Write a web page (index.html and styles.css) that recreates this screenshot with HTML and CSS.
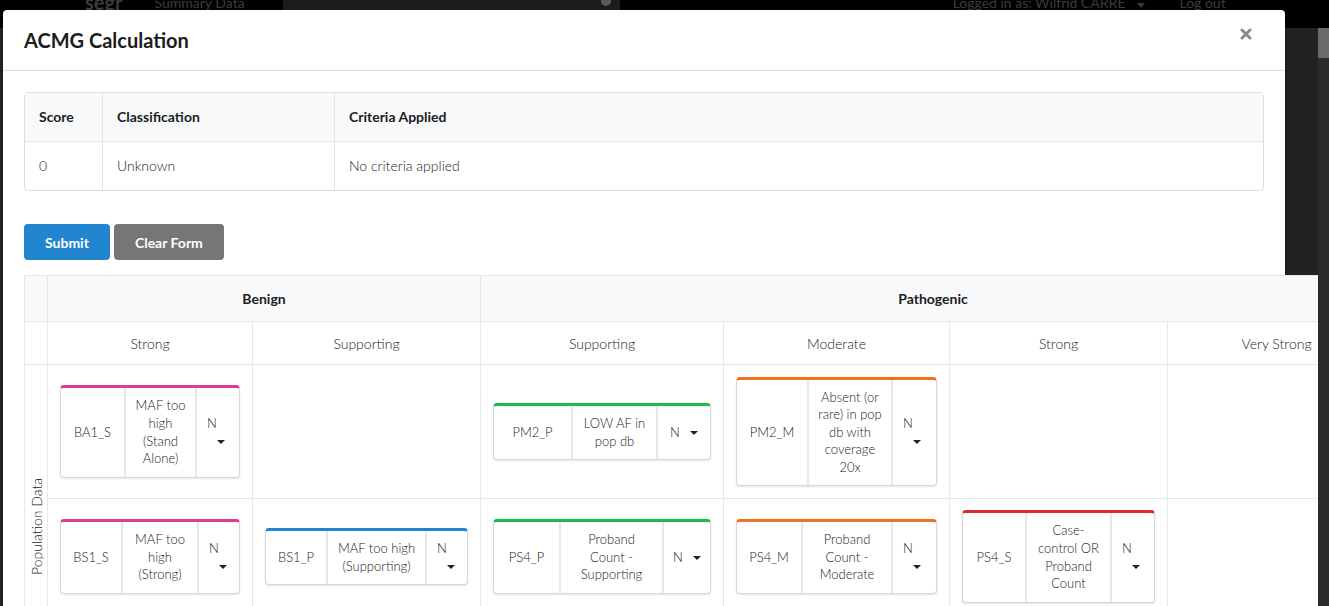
FILE: index.html
```html
<!DOCTYPE html>
<html lang="en">
<head>
<meta charset="utf-8">
<title>ACMG Calculation</title>
<link rel="stylesheet" href="styles.css">
</head>
<body>
<header class="topbar">
  <span class="brand">segr</span>
  <span class="nav-item">Summary Data</span>
  <span class="search"><span class="search-icon"></span></span>
  <span class="user">Logged in as: Wilfrid CARRE</span>
  <svg class="user-caret" width="8" height="5" viewBox="0 0 8 5"><polygon points="0,0 8,0 4,5" fill="#3a3a3a"/></svg>
  <span class="logout">Log out</span>
</header>

<div class="modal">
  <div class="modal-header">
    <h1 class="modal-title">ACMG Calculation</h1>
    <button class="close" aria-label="Close">
      <svg width="12" height="12" viewBox="0 0 12 12"><path d="M2 2 L10 10 M10 2 L2 10" stroke="#8a8a8a" stroke-width="3" stroke-linecap="round"/></svg>
    </button>
  </div>
  <div class="modal-content">
    <table class="summary">
      <thead>
        <tr><th class="c-score">Score</th><th class="c-class">Classification</th><th>Criteria Applied</th></tr>
      </thead>
      <tbody>
        <tr><td>0</td><td>Unknown</td><td>No criteria applied</td></tr>
      </tbody>
    </table>

    <div class="actions">
      <button class="btn btn-primary">Submit</button>
      <button class="btn btn-grey">Clear Form</button>
    </div>

    <table class="criteria">
      <colgroup>
        <col class="w-lab"><col class="w-bs"><col class="w-bp"><col class="w-pp"><col class="w-pm"><col class="w-ps"><col class="w-pvs">
      </colgroup>
      <thead>
        <tr class="group-row">
          <th class="lab"></th>
          <th colspan="2">Benign</th>
          <th colspan="4">Pathogenic</th>
        </tr>
        <tr class="level-row">
          <th class="lab"></th>
          <th>Strong</th>
          <th>Supporting</th>
          <th>Supporting</th>
          <th>Moderate</th>
          <th>Strong</th>
          <th>Very Strong</th>
        </tr>
      </thead>
      <tbody>
        <tr class="row-1">
          <td class="lab" rowspan="3"><span class="vlabel">Population Data</span></td>
          <td>
            <div class="card pink k-ba1">
              <div class="code">BA1_S</div>
              <div class="desc">MAF too high (Stand Alone)</div>
              <div class="sel stack"><span class="n">N</span><span class="caret"></span></div>
            </div>
          </td>
          <td></td>
          <td>
            <div class="card green k-pm2p">
              <div class="code">PM2_P</div>
              <div class="desc">LOW AF in pop db</div>
              <div class="sel inline"><span class="n">N</span><span class="caret"></span></div>
            </div>
          </td>
          <td>
            <div class="card orange k-pm2m">
              <div class="code">PM2_M</div>
              <div class="desc">Absent (or rare) in pop db with coverage 20x</div>
              <div class="sel stack"><span class="n">N</span><span class="caret"></span></div>
            </div>
          </td>
          <td></td>
          <td></td>
        </tr>
        <tr class="row-2">
          <td>
            <div class="card pink k-bs1s">
              <div class="code">BS1_S</div>
              <div class="desc">MAF too high (Strong)</div>
              <div class="sel stack"><span class="n">N</span><span class="caret"></span></div>
            </div>
          </td>
          <td>
            <div class="card blue k-bs1p">
              <div class="code">BS1_P</div>
              <div class="desc">MAF too high (Supporting)</div>
              <div class="sel stack"><span class="n">N</span><span class="caret"></span></div>
            </div>
          </td>
          <td>
            <div class="card green k-ps4p">
              <div class="code">PS4_P</div>
              <div class="desc">Proband Count - Supporting</div>
              <div class="sel inline"><span class="n">N</span><span class="caret"></span></div>
            </div>
          </td>
          <td>
            <div class="card orange k-ps4m">
              <div class="code">PS4_M</div>
              <div class="desc">Proband Count - Moderate</div>
              <div class="sel stack"><span class="n">N</span><span class="caret"></span></div>
            </div>
          </td>
          <td>
            <div class="card red k-ps4s">
              <div class="code">PS4_S</div>
              <div class="desc">Case-control OR Proband Count</div>
              <div class="sel stack"><span class="n">N</span><span class="caret"></span></div>
            </div>
          </td>
          <td></td>
        </tr>
        <tr class="row-3">
          <td></td><td></td><td></td><td></td><td></td><td></td>
        </tr>
      </tbody>
    </table>
  </div>
</div>

<div class="scrollbar">
  <div class="sb-top"></div>
  <div class="sb-thumb"></div>
</div>
</body>
</html>
```

FILE: styles.css
```css
* { box-sizing: border-box; }

html, body {
  margin: 0;
  height: 100%;
}

body {
  position: relative;
  overflow: hidden;
  background: #222222;
  font-family: Lato, "Helvetica Neue", Arial, sans-serif;
  font-size: 14px;
  color: #212121;
}

/* ---------- dimmed page top bar ---------- */
.topbar {
  height: 28px;
  background: #000;
  display: flex;
  align-items: flex-start;
  overflow: hidden;
  color: #3c3c3c;
}
.brand {
  margin: -8px 0 0 85px;
  font-size: 20px;
  line-height: 20px;
  font-weight: 700;
}
.nav-item {
  margin: -4px 0 0 32px;
  font-size: 14px;
  line-height: 14px;
}
.search {
  margin-left: 38px;
  width: 337px;
  height: 28px;
  background: #1c1c1c;
  position: relative;
  flex: none;
}
.search-icon {
  position: absolute;
  left: 318px;
  top: -4px;
  width: 10px;
  height: 10px;
  border-radius: 50%;
  background: #5a5a5a;
}
.user {
  margin: -4px 0 0 333px;
  font-size: 14px;
  line-height: 14px;
}
.user-caret {
  margin: 3px 0 0 12px;
}
.logout {
  margin: -4px 0 0 34px;
  font-size: 14px;
  line-height: 14px;
}

/* fake window scrollbar */
.scrollbar {
  position: absolute;
  top: 0;
  right: 0;
  width: 11px;
  height: 100%;
  background: #2b2b2b;
  z-index: 5;
}
.sb-top { height: 28px; background: #000; }
.sb-thumb { height: 30px; background: #6a6a6a; }

/* ---------- modal ---------- */
.modal {
  position: absolute;
  top: 10px;
  left: 3px;
  width: 1282px;
  background: #fff;
  border-radius: 4px;
  box-shadow: 1px 3px 3px 0 rgba(0,0,0,.2);
}
.modal-header {
  display: flex;
  align-items: center;
  justify-content: space-between;
  padding: 17px 21px 17px 21px;
  border-bottom: 1px solid #dededf;
}
.modal-title {
  margin: 0;
  font-size: 20px;
  line-height: 26px;
  font-weight: 700;
  color: #1d1d1d;
}
.close {
  border: 0;
  background: none;
  padding: 0;
  margin: -12px 12px 0 0;
  width: 12px;
  height: 12px;
  display: flex;
}

.modal-content {
  padding: 21px 21px 40px 21px;
}

/* ---------- summary table ---------- */
.summary {
  width: 100%;
  border-collapse: separate;
  border-spacing: 0;
  border: 1px solid #dededf;
  border-radius: 4px;
}
.summary th,
.summary td {
  text-align: left;
  padding: 14px 14px;
  line-height: 20px;
}
.summary th {
  background: #f7f9fb;
  font-weight: 700;
  font-size: 14px;
  color: #1d1d1d;
  border-bottom: 1px solid #e6e6e6;
}
.summary td {
  font-weight: 300;
  color: #222;
}
.summary th + th,
.summary td + td {
  border-left: 1px solid #e6e6e6;
}
.c-score { width: 77px; }
.c-class { width: 232px; }

/* ---------- buttons ---------- */
.actions {
  display: flex;
  gap: 4px;
  margin: 33px 0 15px 0;
}
.btn {
  font-family: inherit;
  font-size: 14px;
  font-weight: 700;
  line-height: 15px;
  color: #fff;
  border: 0;
  border-radius: 4px;
  padding: 10px 21px;
  height: 36px;
}
.btn-primary { background: #2185d0; }
.btn-grey { background: #767676; }

/* ---------- criteria table ---------- */
.criteria {
  width: 1361px;
  table-layout: fixed;
  border-collapse: collapse;
  border: 1px solid #dededf;
  background: #fff;
}
.w-lab { width: 23px; }
.w-bs { width: 205px; }
.w-bp { width: 228px; }
.w-pp { width: 243px; }
.w-pm { width: 226px; }
.w-ps { width: 218px; }
.w-pvs { width: 218px; }

.criteria th,
.criteria td {
  border: 1px solid #e8e8e8;
  padding: 0;
  background: #fff;
}
.criteria .group-row th {
  height: 46px;
  background: #f7f9fb;
  font-weight: 700;
  font-size: 14px;
  color: #1d1d1d;
  text-align: center;
}
.level-row th {
  height: 43px;
  font-weight: 300;
  font-size: 14px;
  color: #222;
  text-align: center;
}
.criteria td {
  padding: 11px 12px 11px 12px;
  vertical-align: middle;
}
.row-1 td { height: 134px; }
.row-2 td { height: 116px; }
.row-3 td { height: 76px; }
.criteria td.lab {
  padding: 0;
  text-align: center;
}
.vlabel {
  display: inline-block;
  writing-mode: vertical-rl;
  transform: rotate(180deg);
  font-weight: 300;
  font-size: 14px;
  color: #222;
}

/* ---------- criterion cards ---------- */
.card {
  display: grid;
  border: 1px solid #d7d7d8;
  border-top: 3px solid #ccc;
  border-radius: 4px;
  box-shadow: 0 1px 2px 0 rgba(34,36,38,.12);
  font-size: 13px;
  font-weight: 300;
  line-height: 17.6px;
  color: #222;
  background: #fff;
}
.card.pink { border-top-color: #e03997; }
.card.green { border-top-color: #21ba45; }
.card.orange { border-top-color: #f2711c; }
.card.blue { border-top-color: #2185d0; }
.card.red { border-top-color: #db2828; }

.card > div {
  padding: 9px 8px;
  display: flex;
  align-items: center;
  justify-content: center;
  text-align: center;
}
.card > div + div {
  border-left: 2px solid #e8e8e8;
}
.card .desc { padding: 9px 9px; }

.card .sel { padding: 9px 4px; }
.card .sel.stack {
  flex-direction: column;
  align-items: flex-start;
  justify-content: center;
  padding-left: 10px;
}
.card .sel.inline {
  flex-direction: row;
  justify-content: center;
  gap: 10px;
}
.caret {
  position: relative;
  width: 8px;
  height: 17.6px;
}
.caret::before {
  content: "";
  position: absolute;
  left: 0;
  top: 7px;
  border-left: 4px solid transparent;
  border-right: 4px solid transparent;
  border-top: 4px solid #222;
}
.sel.stack .caret { margin-left: 10px; }

.k-ba1 { grid-template-columns: 63px 71px 1fr; }
.k-pm2p { grid-template-columns: 77px 85px 1fr; }
.k-pm2m { grid-template-columns: 70px 84px 1fr; }
.k-bs1s { grid-template-columns: 60px 76px 1fr; }
.k-bs1p { grid-template-columns: 60px 99px 1fr; }
.k-ps4p { grid-template-columns: 65px 103px 1fr; }
.k-ps4m { grid-template-columns: 64px 90px 1fr; }
.k-ps4s { grid-template-columns: 62px 85px 1fr; }
```
